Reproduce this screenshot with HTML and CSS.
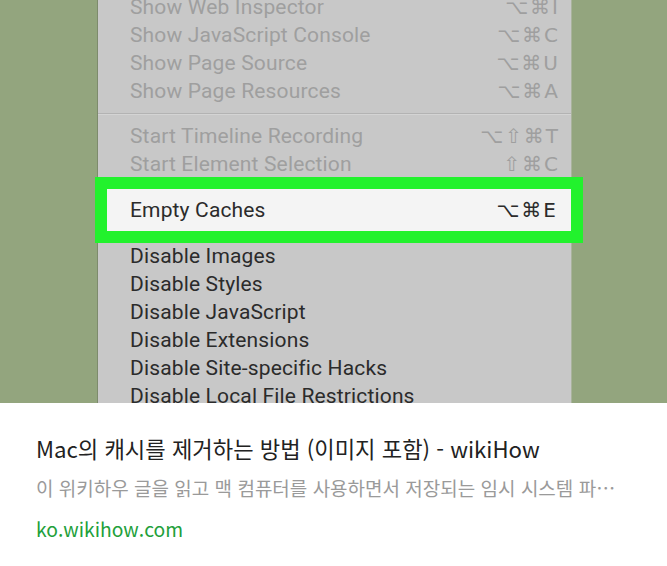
FILE: index.html
```html
<!DOCTYPE html>
<html lang="ko">
<head>
<meta charset="utf-8">
<title>Mac의 캐시를 제거하는 방법</title>
<link rel="stylesheet" href="styles.css">
</head>
<body>
<div class="page">
  <div class="hero">
    <div class="menu">
      <div class="list">
        <div class="row off"><span>Show Web Inspector</span><span class="key">⌥⌘I</span></div>
        <div class="row off"><span>Show JavaScript Console</span><span class="key">⌥⌘C</span></div>
        <div class="row off"><span>Show Page Source</span><span class="key">⌥⌘U</span></div>
        <div class="row off"><span>Show Page Resources</span><span class="key">⌥⌘A</span></div>
        <div class="sep"></div>
        <div class="row off"><span>Start Timeline Recording</span><span class="key">⌥⇧⌘T</span></div>
        <div class="row off"><span>Start Element Selection</span><span class="key">⇧⌘C</span></div>
        <div class="hl">
          <div class="row on hl-row"><span>Empty Caches</span><span class="key">⌥⌘E</span></div>
        </div>
        <div class="row on"><span>Disable Images</span></div>
        <div class="row on"><span>Disable Styles</span></div>
        <div class="row on"><span>Disable JavaScript</span></div>
        <div class="row on"><span>Disable Extensions</span></div>
        <div class="row on"><span>Disable Site-specific Hacks</span></div>
        <div class="row on"><span>Disable Local File Restrictions</span></div>
      </div>
    </div>
  </div>
  <div class="card">
    <div class="title">Mac의 캐시를 제거하는 방법 (이미지 포함) - wikiHow</div>
    <div class="desc">이 위키하우 글을 읽고 맥 컴퓨터를 사용하면서 저장되는 임시 시스템 파일을 제거하는 방법을 알아보세요.</div>
    <div class="url">ko.wikihow.com</div>
  </div>
</div>
</body>
</html>
```
FILE: styles.css
```css
* { box-sizing: border-box; }
html, body { margin: 0; padding: 0; background: #ffffff; }
.page { width: 667px; height: 566px; overflow: hidden; }

.hero {
  height: 403px;
  background: #93a57e;
  overflow: hidden;
  display: flex;
}
.menu {
  margin-left: 97px;
  width: 475px;
  height: 403px;
  background: #c8c8c8;
  border-left: 1px solid #7d8b6c;
  border-right: 1px solid #a9b39c;
  font-family: "Roboto", "Liberation Sans", sans-serif;
  font-size: 21px;
  letter-spacing: 0.15px;
}
.list { margin-top: -7px; display: flex; flex-direction: column; }
.row {
  height: 28px;
  display: flex;
  align-items: center;
  justify-content: space-between;
  padding-left: 32px;
  padding-right: 13px;
}
.off { color: #9f9f9f; }
.on { color: #2b2b2b; }
.key {
  font-family: "DejaVu Sans", sans-serif;
  font-size: 20px;
  letter-spacing: 2px;
  margin-right: -2px;
}
.sep {
  height: 17px;
  display: flex;
  flex-direction: column;
  justify-content: center;
}
.sep::before {
  content: "";
  display: block;
  height: 2px;
  background: linear-gradient(#b3b3b3 50%, #d4d4d4 50%);
}
.hl {
  margin: -1px -12px -1px -3px;
  border: 12px solid #22f22d;
  background: #f4f4f4;
  height: 66px;
  display: flex;
  align-items: center;
}
.hl-row {
  flex: 1;
  padding-left: 23px;
  padding-right: 15px;
}

.card {
  height: 163px;
  padding: 28px 36px 0 36px;
  font-family: "Noto Sans CJK KR", "Noto Sans", sans-serif;
}
.title {
  font-size: 22.2px;
  line-height: 34px;
  color: #222222;
  white-space: nowrap;
}
.desc {
  margin-top: 9px;
  font-size: 19px;
  line-height: 28px;
  color: #9a9a9a;
  white-space: nowrap;
  overflow: hidden;
  text-overflow: ellipsis;
  width: 581px;
}
.url {
  margin-top: 13px;
  font-size: 19.3px;
  line-height: 28px;
  color: #22a03a;
}
```
